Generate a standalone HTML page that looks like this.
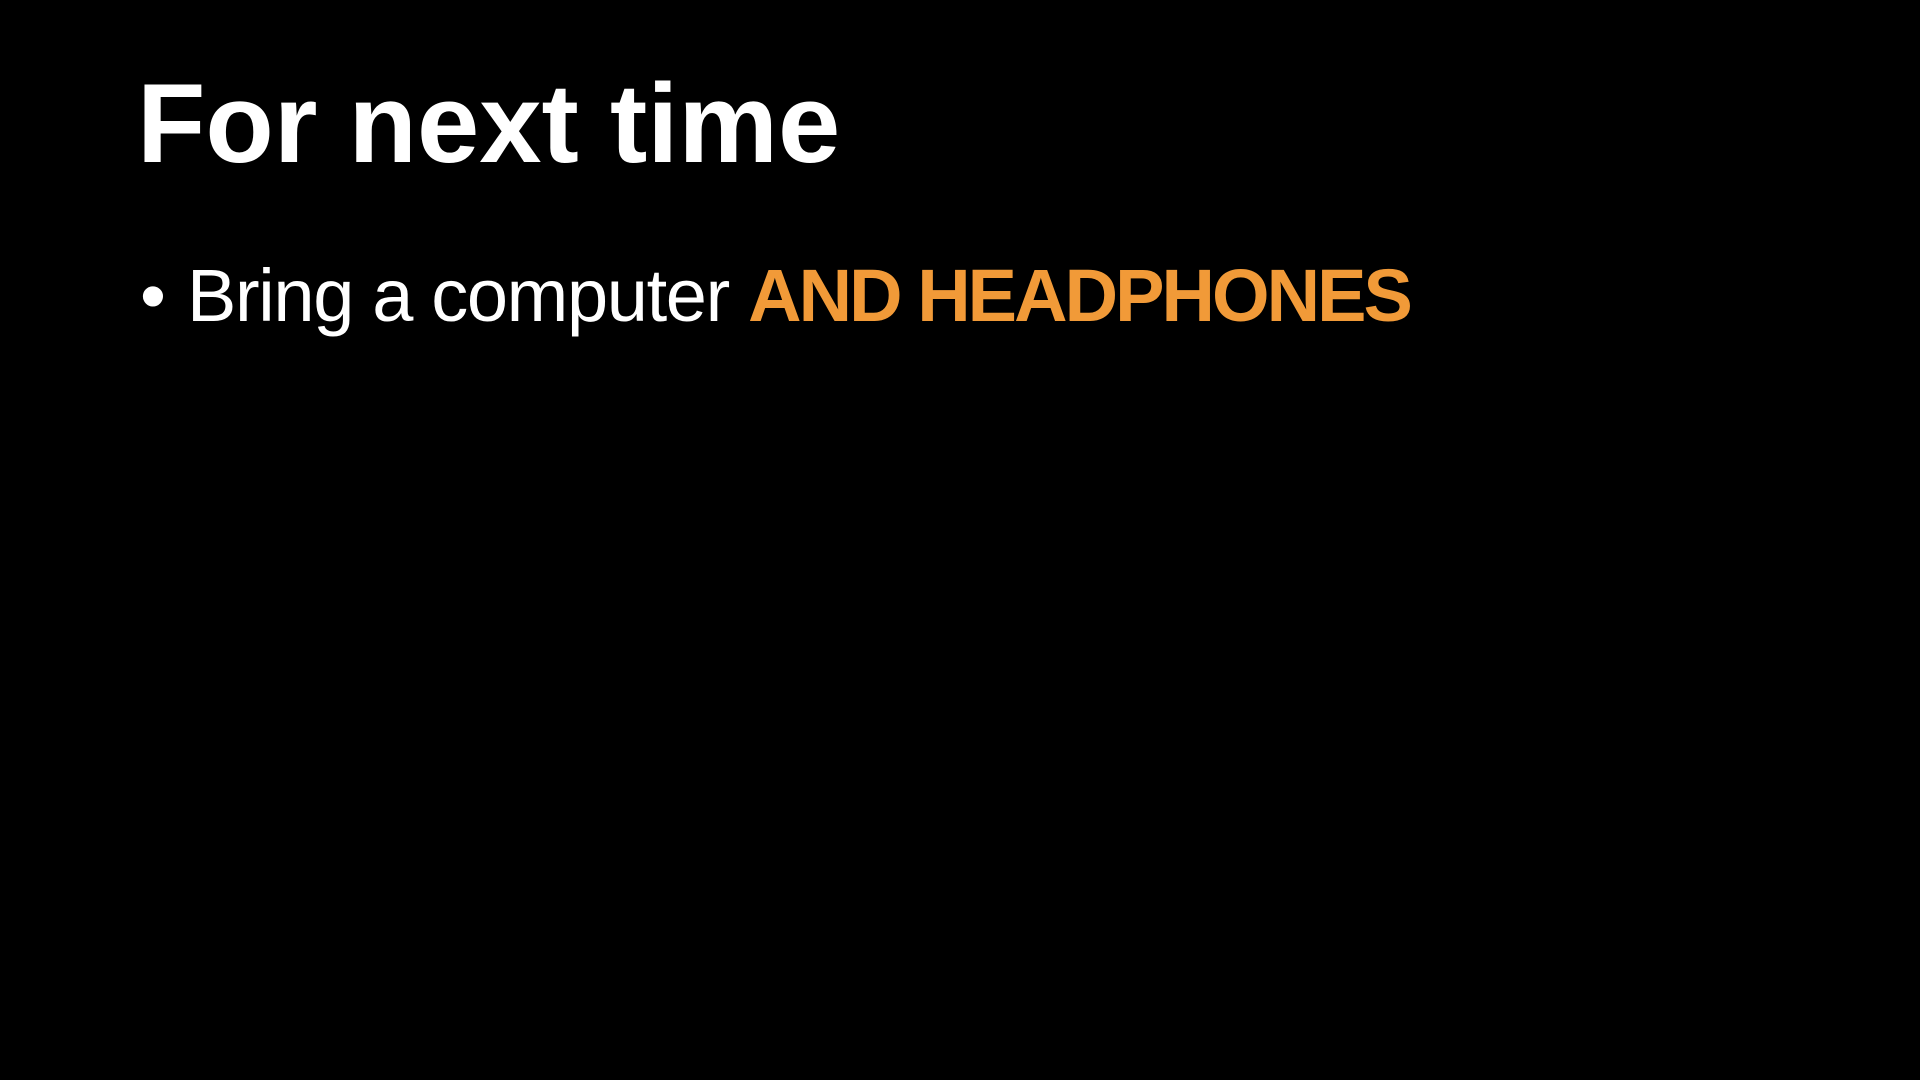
<!DOCTYPE html>
<html><head><meta charset="utf-8"><style>
html,body{margin:0;padding:0;background:#000;width:1920px;height:1080px;overflow:hidden}
body{font-family:"Liberation Sans",Arial,sans-serif;color:#fff;position:relative}
h1{position:absolute;left:137px;top:54px;margin:0;font-size:112px;font-weight:bold;line-height:140px;letter-spacing:0px;white-space:nowrap}
.b{position:absolute;left:140px;top:251px;font-size:74px;line-height:90px;white-space:nowrap}
.b .dot{position:absolute;left:0;top:0}
.b .t{position:absolute;left:47px;top:0;letter-spacing:-1.35px}
.o{color:#F19A38;font-weight:bold;letter-spacing:-2.95px}
</style></head><body>
<h1>For next time</h1>
<div class="b"><span class="dot">•</span><span class="t">Bring a computer <span class="o">AND HEADPHONES</span></span></div>
</body></html>
